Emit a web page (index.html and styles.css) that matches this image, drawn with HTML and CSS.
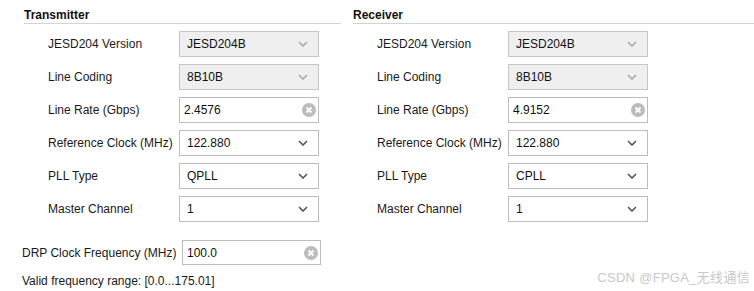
FILE: index.html
```html
<!DOCTYPE html>
<html lang="en">
<head>
    <meta charset="UTF-8">
    <meta name="viewport" content="width=device-width, initial-scale=1.0">
    <title>Transceiver Settings</title>
    <link rel="stylesheet" href="styles.css">
</head>
<body>
    <div class="panels">
        <!-- Transmitter -->
        <section class="group">
            <h2 class="group-title">Transmitter</h2>
            <div class="rows">
                <div class="row">
                    <span class="label">JESD204 Version</span>
                    <div class="field disabled">
                        <span class="value">JESD204B</span>
                        <svg class="chev" width="10" height="6" viewBox="0 0 10 6"><polyline points="1,1 5,5 9,1" fill="none" stroke-width="1.6"/></svg>
                    </div>
                </div>
                <div class="row">
                    <span class="label">Line Coding</span>
                    <div class="field disabled">
                        <span class="value">8B10B</span>
                        <svg class="chev" width="10" height="6" viewBox="0 0 10 6"><polyline points="1,1 5,5 9,1" fill="none" stroke-width="1.6"/></svg>
                    </div>
                </div>
                <div class="row">
                    <span class="label">Line Rate (Gbps)</span>
                    <div class="field text">
                        <span class="value">2.4576</span>
                        <svg class="clear" width="14" height="14" viewBox="0 0 14 14"><circle cx="7" cy="7" r="7" fill="#bcbcbc"/><path d="M4.5 4.5 L9.5 9.5 M9.5 4.5 L4.5 9.5" stroke="#fff" stroke-width="1.9"/></svg>
                    </div>
                </div>
                <div class="row">
                    <span class="label">Reference Clock (MHz)</span>
                    <div class="field">
                        <span class="value">122.880</span>
                        <svg class="chev" width="10" height="6" viewBox="0 0 10 6"><polyline points="1,1 5,5 9,1" fill="none" stroke-width="1.6"/></svg>
                    </div>
                </div>
                <div class="row">
                    <span class="label">PLL Type</span>
                    <div class="field">
                        <span class="value">QPLL</span>
                        <svg class="chev" width="10" height="6" viewBox="0 0 10 6"><polyline points="1,1 5,5 9,1" fill="none" stroke-width="1.6"/></svg>
                    </div>
                </div>
                <div class="row">
                    <span class="label">Master Channel</span>
                    <div class="field">
                        <span class="value">1</span>
                        <svg class="chev" width="10" height="6" viewBox="0 0 10 6"><polyline points="1,1 5,5 9,1" fill="none" stroke-width="1.6"/></svg>
                    </div>
                </div>
            </div>
        </section>

        <!-- Receiver -->
        <section class="group">
            <h2 class="group-title">Receiver</h2>
            <div class="rows">
                <div class="row">
                    <span class="label">JESD204 Version</span>
                    <div class="field disabled">
                        <span class="value">JESD204B</span>
                        <svg class="chev" width="10" height="6" viewBox="0 0 10 6"><polyline points="1,1 5,5 9,1" fill="none" stroke-width="1.6"/></svg>
                    </div>
                </div>
                <div class="row">
                    <span class="label">Line Coding</span>
                    <div class="field disabled">
                        <span class="value">8B10B</span>
                        <svg class="chev" width="10" height="6" viewBox="0 0 10 6"><polyline points="1,1 5,5 9,1" fill="none" stroke-width="1.6"/></svg>
                    </div>
                </div>
                <div class="row">
                    <span class="label">Line Rate (Gbps)</span>
                    <div class="field text">
                        <span class="value">4.9152</span>
                        <svg class="clear" width="14" height="14" viewBox="0 0 14 14"><circle cx="7" cy="7" r="7" fill="#bcbcbc"/><path d="M4.5 4.5 L9.5 9.5 M9.5 4.5 L4.5 9.5" stroke="#fff" stroke-width="1.9"/></svg>
                    </div>
                </div>
                <div class="row">
                    <span class="label">Reference Clock (MHz)</span>
                    <div class="field">
                        <span class="value">122.880</span>
                        <svg class="chev" width="10" height="6" viewBox="0 0 10 6"><polyline points="1,1 5,5 9,1" fill="none" stroke-width="1.6"/></svg>
                    </div>
                </div>
                <div class="row">
                    <span class="label">PLL Type</span>
                    <div class="field">
                        <span class="value">CPLL</span>
                        <svg class="chev" width="10" height="6" viewBox="0 0 10 6"><polyline points="1,1 5,5 9,1" fill="none" stroke-width="1.6"/></svg>
                    </div>
                </div>
                <div class="row">
                    <span class="label">Master Channel</span>
                    <div class="field">
                        <span class="value">1</span>
                        <svg class="chev" width="10" height="6" viewBox="0 0 10 6"><polyline points="1,1 5,5 9,1" fill="none" stroke-width="1.6"/></svg>
                    </div>
                </div>
            </div>
        </section>
    </div>

    <!-- DRP clock -->
    <div class="drp">
        <div class="drp-row">
            <span class="drp-label">DRP Clock Frequency (MHz)</span>
            <div class="field text drp-field">
                <span class="value">100.0</span>
                <svg class="clear" width="14" height="14" viewBox="0 0 14 14"><circle cx="7" cy="7" r="7" fill="#bcbcbc"/><path d="M4.5 4.5 L9.5 9.5 M9.5 4.5 L4.5 9.5" stroke="#fff" stroke-width="1.9"/></svg>
            </div>
        </div>
        <p class="hint">Valid frequency range: [0.0...175.01]</p>
    </div>

    <div class="watermark">CSDN @FPGA_无线通信</div>
</body>
</html>
```

FILE: styles.css
```css
body {
    margin: 0;
    font-family: "Liberation Sans", Arial, "Noto Sans CJK SC", sans-serif;
    font-size: 12px;
    color: #1a1a1a;
    background: #fff;
    position: relative;
    height: 291px;
    overflow: hidden;
}
.panels {
    display: grid;
    grid-template-columns: 317px 1fr;
    gap: 12px;
    padding-left: 24px;
}
.group-title {
    margin: 0;
    padding-top: 8px;
    font-size: 12px;
    line-height: 15px;
    font-weight: bold;
    color: #111;
    border-bottom: 1px solid #d3d3d3;
}
.rows {
    display: flex;
    flex-direction: column;
    gap: 7px;
    padding: 7px 0 0 24px;
}
.row {
    display: flex;
    align-items: center;
}
.label {
    width: 131px;
    flex: none;
}
.field {
    box-sizing: border-box;
    width: 140px;
    height: 26px;
    border: 1px solid #bdbdbd;
    background: #fff;
    display: flex;
    align-items: center;
    justify-content: space-between;
    padding: 0 10px 0 7px;
}
.field .value {
    color: #111;
}
.field .chev {
    stroke: #555;
}
.field.disabled {
    background: #efefef;
    border-color: #c6c6c6;
}
.field.disabled .chev {
    stroke: #a8a8a8;
}
.field.text {
    padding: 0 2px 0 4px;
}
.drp {
    padding: 18px 0 0 22px;
}
.drp-row {
    display: flex;
    align-items: center;
}
.drp-label {
    width: 160px;
    flex: none;
}
.drp-field {
    width: 139px;
    height: 25px;
}
.hint {
    margin: 9px 0 0;
    line-height: 14px;
}
.watermark {
    position: absolute;
    right: 4px;
    bottom: 5px;
    font-size: 13px;
    color: #c8c8c8;
    letter-spacing: 0.3px;
}
```
